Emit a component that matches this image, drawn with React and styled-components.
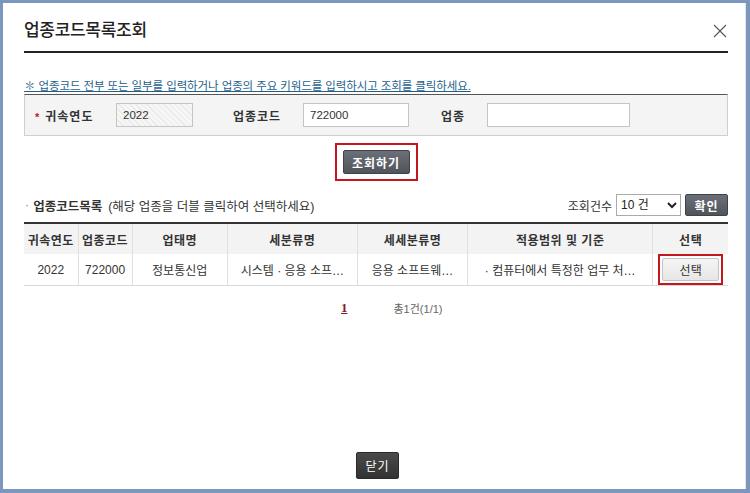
import React from "react";
import styled, { createGlobalStyle } from "styled-components";

const Global = createGlobalStyle`
  html, body { margin: 0; padding: 0; }
  body {
    background: #7b97bd;
    font-family: "Liberation Sans", "Noto Sans CJK KR", sans-serif;
    color: #333;
  }
  #root { height: 493px; }
`;

const Frame = styled.div`
  box-sizing: border-box;
  height: 493px;
  padding: 3px 4px 4px 3px;
`;

const Panel = styled.div`
  box-sizing: border-box;
  height: 100%;
  background: #fff;
  border-right: 1px solid #dfe6ef;
  padding: 0 17px 0 21px;
  display: flex;
  flex-direction: column;
`;

const Header = styled.div`
  display: flex;
  align-items: center;
  justify-content: space-between;
  padding: 17px 0 9px;
  border-bottom: 2px solid #222;
`;

const Title = styled.h1`
  margin: 0;
  font-size: 17px;
  line-height: 22px;
  font-weight: 500;
  color: #222;
  letter-spacing: -0.3px;
`;

const Close = styled.button`
  border: 0;
  background: none;
  padding: 0;
  margin-right: 1px;
  width: 14px;
  height: 14px;
  cursor: pointer;
`;

const Notice = styled.p`
  margin: 25px 0 0;
  font-size: 11.5px;
  line-height: 16px;
  color: #1f5f8b;
  text-decoration: underline;
  letter-spacing: -0.1px;
`;

const SearchBox = styled.div`
  box-sizing: border-box;
  height: 42px;
  display: flex;
  align-items: center;
  background: #f4f4f4;
  border: 1px solid #cfcfcf;
  border-top: 1px solid #555;
  padding-left: 10px;
`;

const Label = styled.label`
  box-sizing: border-box;
  width: ${(p) => p.$w}px;
  padding-left: ${(p) => p.$pl || 0}px;
  font-size: 12px;
  font-weight: bold;
  color: #333;
  letter-spacing: 1px;
`;

const Star = styled.span`
  color: #c4161c;
  margin-right: 5px;
  font-size: 11px;
`;

const Input = styled.input`
  box-sizing: border-box;
  width: ${(p) => p.$w}px;
  height: 24px;
  border: 1px solid #c5c5c5;
  padding: 0 6px;
  font-family: inherit;
  font-size: 11.5px;
  color: #333;
  background: ${(p) =>
    p.$hatch
      ? "repeating-linear-gradient(45deg, #e9e9e9 0 1px, #f6f6f6 1px 4px)"
      : "#fff"};
  outline: none;
`;

const Highlight = styled.div`
  display: inline-flex;
  border: 2px solid #c4161c;
  padding: ${(p) => p.$pad};
`;

const SearchRow = styled.div`
  display: flex;
  justify-content: center;
  margin-top: 7px;
`;

const DarkButton = styled.button`
  box-sizing: border-box;
  width: ${(p) => p.$w}px;
  height: ${(p) => p.$h}px;
  border: 1px solid #3e434a;
  border-radius: 2px;
  background: linear-gradient(#6b7078, #50555c);
  color: #fff;
  font-family: inherit;
  font-size: 12px;
  font-weight: bold;
  letter-spacing: 1px;
  cursor: pointer;
  padding: 0;
`;

const ListBar = styled.div`
  display: flex;
  align-items: center;
  justify-content: space-between;
  margin-top: 13px;
  height: 22px;
`;

const ListTitle = styled.div`
  font-size: 12.5px;
  color: #333;
  display: flex;
  align-items: center;
`;

const Dot = styled.span`
  color: #888;
  margin: 0 4px 0 1px;
`;

const Strong = styled.b`
  font-size: 12.5px;
  margin-right: 6px;
`;

const Controls = styled.div`
  display: flex;
  align-items: center;
  gap: 4px;
  font-size: 12px;
`;

const Select = styled.select`
  width: 65px;
  height: 22px;
  border: 1px solid #aaa;
  font-family: inherit;
  font-size: 12px;
  color: #222;
  background: #fff;
`;

const Table = styled.table`
  width: 100%;
  margin-top: 6px;
  border-collapse: collapse;
  border-top: 2px solid #333;
  table-layout: fixed;
  font-size: 12px;
`;

const Th = styled.th`
  height: 30px;
  padding: 0;
  background: #f3f3f3;
  border-left: 1px solid #e0e0e0;
  font-weight: bold;
  font-size: 12px;
  color: #333;
  letter-spacing: 0.5px;
  &:first-child { border-left: 0; }
`;

const Td = styled.td`
  height: 29px;
  padding: 0;
  text-align: center;
  border-left: 1px solid #e0e0e0;
  border-bottom: 1px solid #d8d8d8;
  color: #333;
  white-space: nowrap;
  overflow: hidden;
  &:first-child { border-left: 0; }
`;

const LightButton = styled.button`
  box-sizing: border-box;
  width: 57px;
  height: 23px;
  border: 1px solid #c4c4c4;
  border-radius: 2px;
  background: linear-gradient(#f5f5f5, #e6e6e6);
  font-family: inherit;
  font-size: 12px;
  color: #333;
  padding: 0;
  cursor: pointer;
`;

const Pager = styled.div`
  display: flex;
  align-items: center;
  margin-top: 14px;
  padding-left: 317px;
  height: 16px;
`;

const PageNum = styled.a`
  font-family: "Liberation Serif", serif;
  font-weight: bold;
  font-size: 13px;
  color: #7a1f2b;
  text-decoration: underline;
  margin-right: 46px;
`;

const Total = styled.span`
  font-size: 11px;
  color: #666;
`;

const Footer = styled.div`
  margin-top: auto;
  padding-bottom: 10px;
  display: flex;
  justify-content: center;
`;

const CloseButton = styled(DarkButton)`
  background: linear-gradient(#4a4a4a, #333);
  border-color: #2a2a2a;
  font-weight: normal;
  margin-left: 3px;
`;

const cols = [54, 54, 95, 130, 110, 185, 75];
const heads = ["귀속연도", "업종코드", "업태명", "세분류명", "세세분류명", "적용범위 및 기준", "선택"];
const row = ["2022", "722000", "정보통신업", "시스템 · 응용 소프…", "응용 소프트웨…", "· 컴퓨터에서 특정한 업무 처…"];

export default function App() {
  return (
    <>
      <Global />
      <Frame>
        <Panel>
          <Header>
            <Title>업종코드목록조회</Title>
            <Close aria-label="닫기">
              <svg width="14" height="14" viewBox="0 0 14 14">
                <path d="M1 1L13 13M13 1L1 13" stroke="#555" strokeWidth="1.1" />
              </svg>
            </Close>
          </Header>

          <Notice>✽ 업종코드 전부 또는 일부를 입력하거나 업종의 주요 키워드를 입력하시고 조회를 클릭하세요.</Notice>

          <SearchBox>
            <Label $w={81}>
              <Star>*</Star>귀속연도
            </Label>
            <Input $w={77} $hatch readOnly defaultValue="2022" />
            <Label $w={110} $pl={40}>업종코드</Label>
            <Input $w={106} defaultValue="722000" />
            <Label $w={78} $pl={32}>업종</Label>
            <Input $w={143} defaultValue="" />
          </SearchBox>

          <SearchRow>
            <Highlight $pad="5px 6px">
              <DarkButton $w={67} $h={24}>조회하기</DarkButton>
            </Highlight>
          </SearchRow>

          <ListBar>
            <ListTitle>
              <Dot>·</Dot>
              <Strong>업종코드목록</Strong>
              (해당 업종을 더블 클릭하여 선택하세요)
            </ListTitle>
            <Controls>
              <span>조회건수</span>
              <Select defaultValue="10">
                <option value="10">10 건</option>
                <option value="20">20 건</option>
                <option value="50">50 건</option>
              </Select>
              <DarkButton $w={43} $h={22}>확인</DarkButton>
            </Controls>
          </ListBar>

          <Table>
            <colgroup>
              {cols.map((w, i) => (
                <col key={i} style={{ width: w }} />
              ))}
            </colgroup>
            <thead>
              <tr>
                {heads.map((h) => (
                  <Th key={h}>{h}</Th>
                ))}
              </tr>
            </thead>
            <tbody>
              <tr>
                {row.map((c, i) => (
                  <Td key={i}>{c}</Td>
                ))}
                <Td>
                  <Highlight $pad="2px">
                    <LightButton>선택</LightButton>
                  </Highlight>
                </Td>
              </tr>
            </tbody>
          </Table>

          <Pager>
            <PageNum>1</PageNum>
            <Total>총1건(1/1)</Total>
          </Pager>

          <Footer>
            <CloseButton $w={43} $h={27}>닫기</CloseButton>
          </Footer>
        </Panel>
      </Frame>
    </>
  );
}
